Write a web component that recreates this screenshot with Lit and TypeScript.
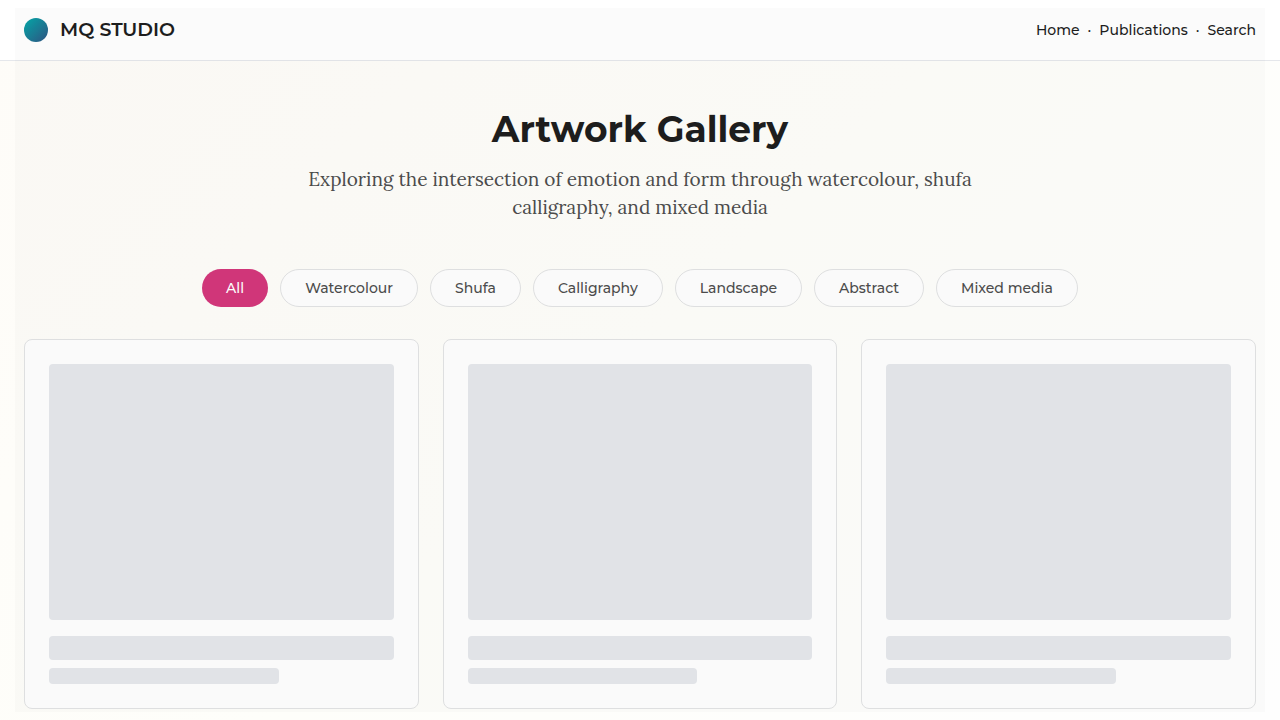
import { LitElement, html, css } from "lit";
import { customElement, state } from "lit/decorators.js";

const CATEGORIES = ["All", "Watercolour", "Shufa", "Calligraphy", "Landscape", "Abstract", "Mixed media"];

@customElement("skeleton-card")
class SkeletonCard extends LitElement {
  static styles = css`
    :host {
      display: block;
      box-sizing: border-box;
      padding: 24px;
      border: 1px solid #e2e3e4;
      border-radius: 8px;
      background: #fefefe;
    }
    .block {
      border-radius: 4px;
      background: #e5e7eb;
    }
    .image {
      height: 256px;
      margin-bottom: 16px;
    }
    .title {
      height: 24px;
      margin-bottom: 8px;
    }
    .meta {
      height: 16px;
      width: 66.667%;
    }
  `;
  render() {
    return html`
      <div class="block image"></div>
      <div class="block title"></div>
      <div class="block meta"></div>
    `;
  }
}

@customElement("app-root")
class AppRoot extends LitElement {
  static styles = css`
    :host {
      display: block;
      box-sizing: border-box;
      min-height: 100vh;
      color: #1a1a1a;
      background: linear-gradient(135deg, #fefcf8 0%, #fefefa 50%, #fefefe 100%);
      font-family: Montserrat, "Open Sans", sans-serif;
    }
    .grain {
      position: fixed;
      inset: 8px 15px;
      background: rgba(120, 120, 120, 0.03);
      pointer-events: none;
    }
    header {
      display: flex;
      align-items: center;
      justify-content: space-between;
      box-sizing: border-box;
      height: 61px;
      padding: 0 24px;
      border-bottom: 1px solid #e5e7eb;
      background: #ffffff;
    }
    .brand {
      display: flex;
      align-items: center;
      gap: 12px;
      color: inherit;
      text-decoration: none;
      font-size: 19px;
      font-weight: 600;
      line-height: 28px;
    }
    .mark {
      width: 24px;
      height: 24px;
      border-radius: 50%;
      background: linear-gradient(135deg, #00a8a8, #2c5282);
    }
    nav {
      display: flex;
      gap: 8px;
      font-size: 14px;
      font-weight: 500;
      line-height: 24px;
    }
    nav a {
      color: inherit;
      text-decoration: none;
    }
    .hero {
      max-width: 672px;
      margin: 0 auto;
      padding: 44px 24px 48px;
      text-align: center;
    }
    h1 {
      margin: 0 0 12px;
      font-size: 36px;
      font-weight: 700;
      line-height: 48px;
    }
    .lead {
      margin: 0;
      color: #4a4a4a;
      font-family: Lora, "Liberation Serif", serif;
      font-size: 19px;
      line-height: 28px;
    }
    .filters {
      display: flex;
      flex-wrap: wrap;
      justify-content: center;
      gap: 12px;
      padding: 0 24px 32px;
    }
    .filter {
      height: 38px;
      padding: 0 24px;
      border: 1px solid #e2e3e4;
      border-radius: 19px;
      background: #fefefe;
      color: #4a4a4a;
      font-family: inherit;
      font-size: 14px;
      font-weight: 500;
      cursor: pointer;
    }
    .filter.active {
      border: none;
      background: #d33479;
      color: #ffffff;
    }
    .gallery {
      display: grid;
      grid-template-columns: repeat(3, minmax(0, 1fr));
      gap: 24px;
      padding: 0 24px 8px;
    }
  `;

  @state() private active = "All";

  render() {
    return html`
      <header>
        <a class="brand" href="#home"><span class="mark"></span>MQ STUDIO</a>
        <nav aria-label="Main">
          <a href="#home">Home</a><span>·</span>
          <a href="#publications">Publications</a><span>·</span>
          <a href="#search">Search</a>
        </nav>
      </header>
      <main>
        <section class="hero">
          <h1>Artwork Gallery</h1>
          <p class="lead">
            Exploring the intersection of emotion and form through watercolour, shufa calligraphy, and mixed media
          </p>
        </section>
        <div class="filters">
          ${CATEGORIES.map(
            (name) => html`<button
              type="button"
              class="filter ${name === this.active ? "active" : ""}"
              aria-pressed=${name === this.active ? "true" : "false"}
              @click=${() => (this.active = name)}
            >${name}</button>`,
          )}
        </div>
        <section class="gallery">
          <skeleton-card></skeleton-card>
          <skeleton-card></skeleton-card>
          <skeleton-card></skeleton-card>
        </section>
      </main>
      <div class="grain"></div>
    `;
  }
}
